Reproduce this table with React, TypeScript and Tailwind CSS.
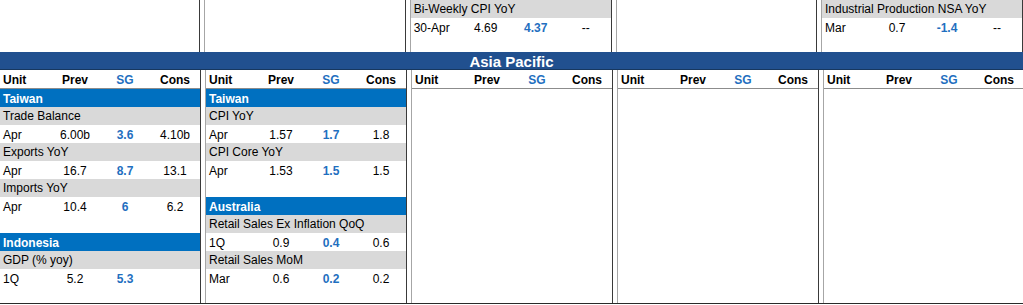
import React from "react";

type Row =
  | { kind: "header" }
  | { kind: "country"; label: string }
  | { kind: "title"; label: string }
  | { kind: "data"; unit: string; prev: string; sg: string; cons: string }
  | { kind: "empty" };

const font = { fontFamily: '"Liberation Sans", Arial, sans-serif' };

function Cells({ unit, prev, sg, cons, bold }: { unit: string; prev: string; sg: string; cons: string; bold?: boolean }) {
  return (
    <div className={`flex h-[18px] text-[12px] leading-[20px] text-black ${bold ? "font-bold" : ""}`}>
      <div className="w-[50px] pl-[3px] whitespace-nowrap">{unit}</div>
      <div className="w-[50px] text-center">{prev}</div>
      <div className="w-[50px] text-center font-bold text-[#1f6fc0]">{sg}</div>
      <div className="w-[50px] text-center">{cons}</div>
    </div>
  );
}

function RowView({ row }: { row: Row }) {
  switch (row.kind) {
    case "header":
      return (
        <div className="border-b border-[#8c8c8c]">
          <Cells unit="Unit" prev="Prev" sg="SG" cons="Cons" bold />
        </div>
      );
    case "country":
      return (
        <div className="h-[18px] bg-[#0070c0] pl-[3px] text-[12px] leading-[20px] font-bold text-white">
          {row.label}
        </div>
      );
    case "title":
      return (
        <div className="h-[18px] bg-[#d9d9d9] pl-[3px] text-[12px] leading-[19px] text-black whitespace-nowrap">
          {row.label}
        </div>
      );
    case "data":
      return <Cells unit={row.unit} prev={row.prev} sg={row.sg} cons={row.cons} />;
    default:
      return <div className="h-[18px]" />;
  }
}

function Block({ rows, first, last }: { rows: Row[]; first?: boolean; last?: boolean }) {
  return (
    <div
      className={`flex flex-col border-r border-[#3a3a3a] ${first ? "w-[201px]" : "border-l border-l-[#a6a6a6]"} ${
        last ? "flex-1" : first ? "" : "w-[202px]"
      }`}
    >
      {rows.map((r, i) => (
        <RowView key={i} row={r} />
      ))}
    </div>
  );
}

const topBlocks: Row[][] = [
  [],
  [],
  [
    { kind: "title", label: "Bi-Weekly CPI YoY" },
    { kind: "data", unit: "30-Apr", prev: "4.69", sg: "4.37", cons: "--" },
  ],
  [],
  [
    { kind: "title", label: "Industrial Production NSA YoY" },
    { kind: "data", unit: "Mar", prev: "0.7", sg: "-1.4", cons: "--" },
  ],
];

const bottomBlocks: Row[][] = [
  [
    { kind: "header" },
    { kind: "country", label: "Taiwan" },
    { kind: "title", label: "Trade Balance" },
    { kind: "data", unit: "Apr", prev: "6.00b", sg: "3.6", cons: "4.10b" },
    { kind: "title", label: "Exports YoY" },
    { kind: "data", unit: "Apr", prev: "16.7", sg: "8.7", cons: "13.1" },
    { kind: "title", label: "Imports YoY" },
    { kind: "data", unit: "Apr", prev: "10.4", sg: "6", cons: "6.2" },
    { kind: "empty" },
    { kind: "country", label: "Indonesia" },
    { kind: "title", label: "GDP (% yoy)" },
    { kind: "data", unit: "1Q", prev: "5.2", sg: "5.3", cons: "" },
  ],
  [
    { kind: "header" },
    { kind: "country", label: "Taiwan" },
    { kind: "title", label: "CPI YoY" },
    { kind: "data", unit: "Apr", prev: "1.57", sg: "1.7", cons: "1.8" },
    { kind: "title", label: "CPI Core YoY" },
    { kind: "data", unit: "Apr", prev: "1.53", sg: "1.5", cons: "1.5" },
    { kind: "empty" },
    { kind: "country", label: "Australia" },
    { kind: "title", label: "Retail Sales Ex Inflation QoQ" },
    { kind: "data", unit: "1Q", prev: "0.9", sg: "0.4", cons: "0.6" },
    { kind: "title", label: "Retail Sales MoM" },
    { kind: "data", unit: "Mar", prev: "0.6", sg: "0.2", cons: "0.2" },
  ],
  [{ kind: "header" }],
  [{ kind: "header" }],
  [{ kind: "header" }],
];

export default function App() {
  return (
    <div className="w-[1023px] h-[305px] bg-white overflow-hidden" style={font}>
      {/* top: tail of the previous region */}
      <div className="flex h-[52px] gap-[4px]">
        {topBlocks.map((rows, i) => (
          <Block key={i} rows={rows} first={i === 0} last={i === 4} />
        ))}
      </div>

      <div className="h-[18px] bg-[#21508f] border-b border-[#17375e] text-center text-[15px] leading-[19px] font-bold text-white">
        Asia Pacific
      </div>

      <div className="flex h-[234px] gap-[4px] border-b border-[#2a2a2a]">
        {bottomBlocks.map((rows, i) => (
          <Block key={i} rows={rows} first={i === 0} last={i === 4} />
        ))}
      </div>
    </div>
  );
}
